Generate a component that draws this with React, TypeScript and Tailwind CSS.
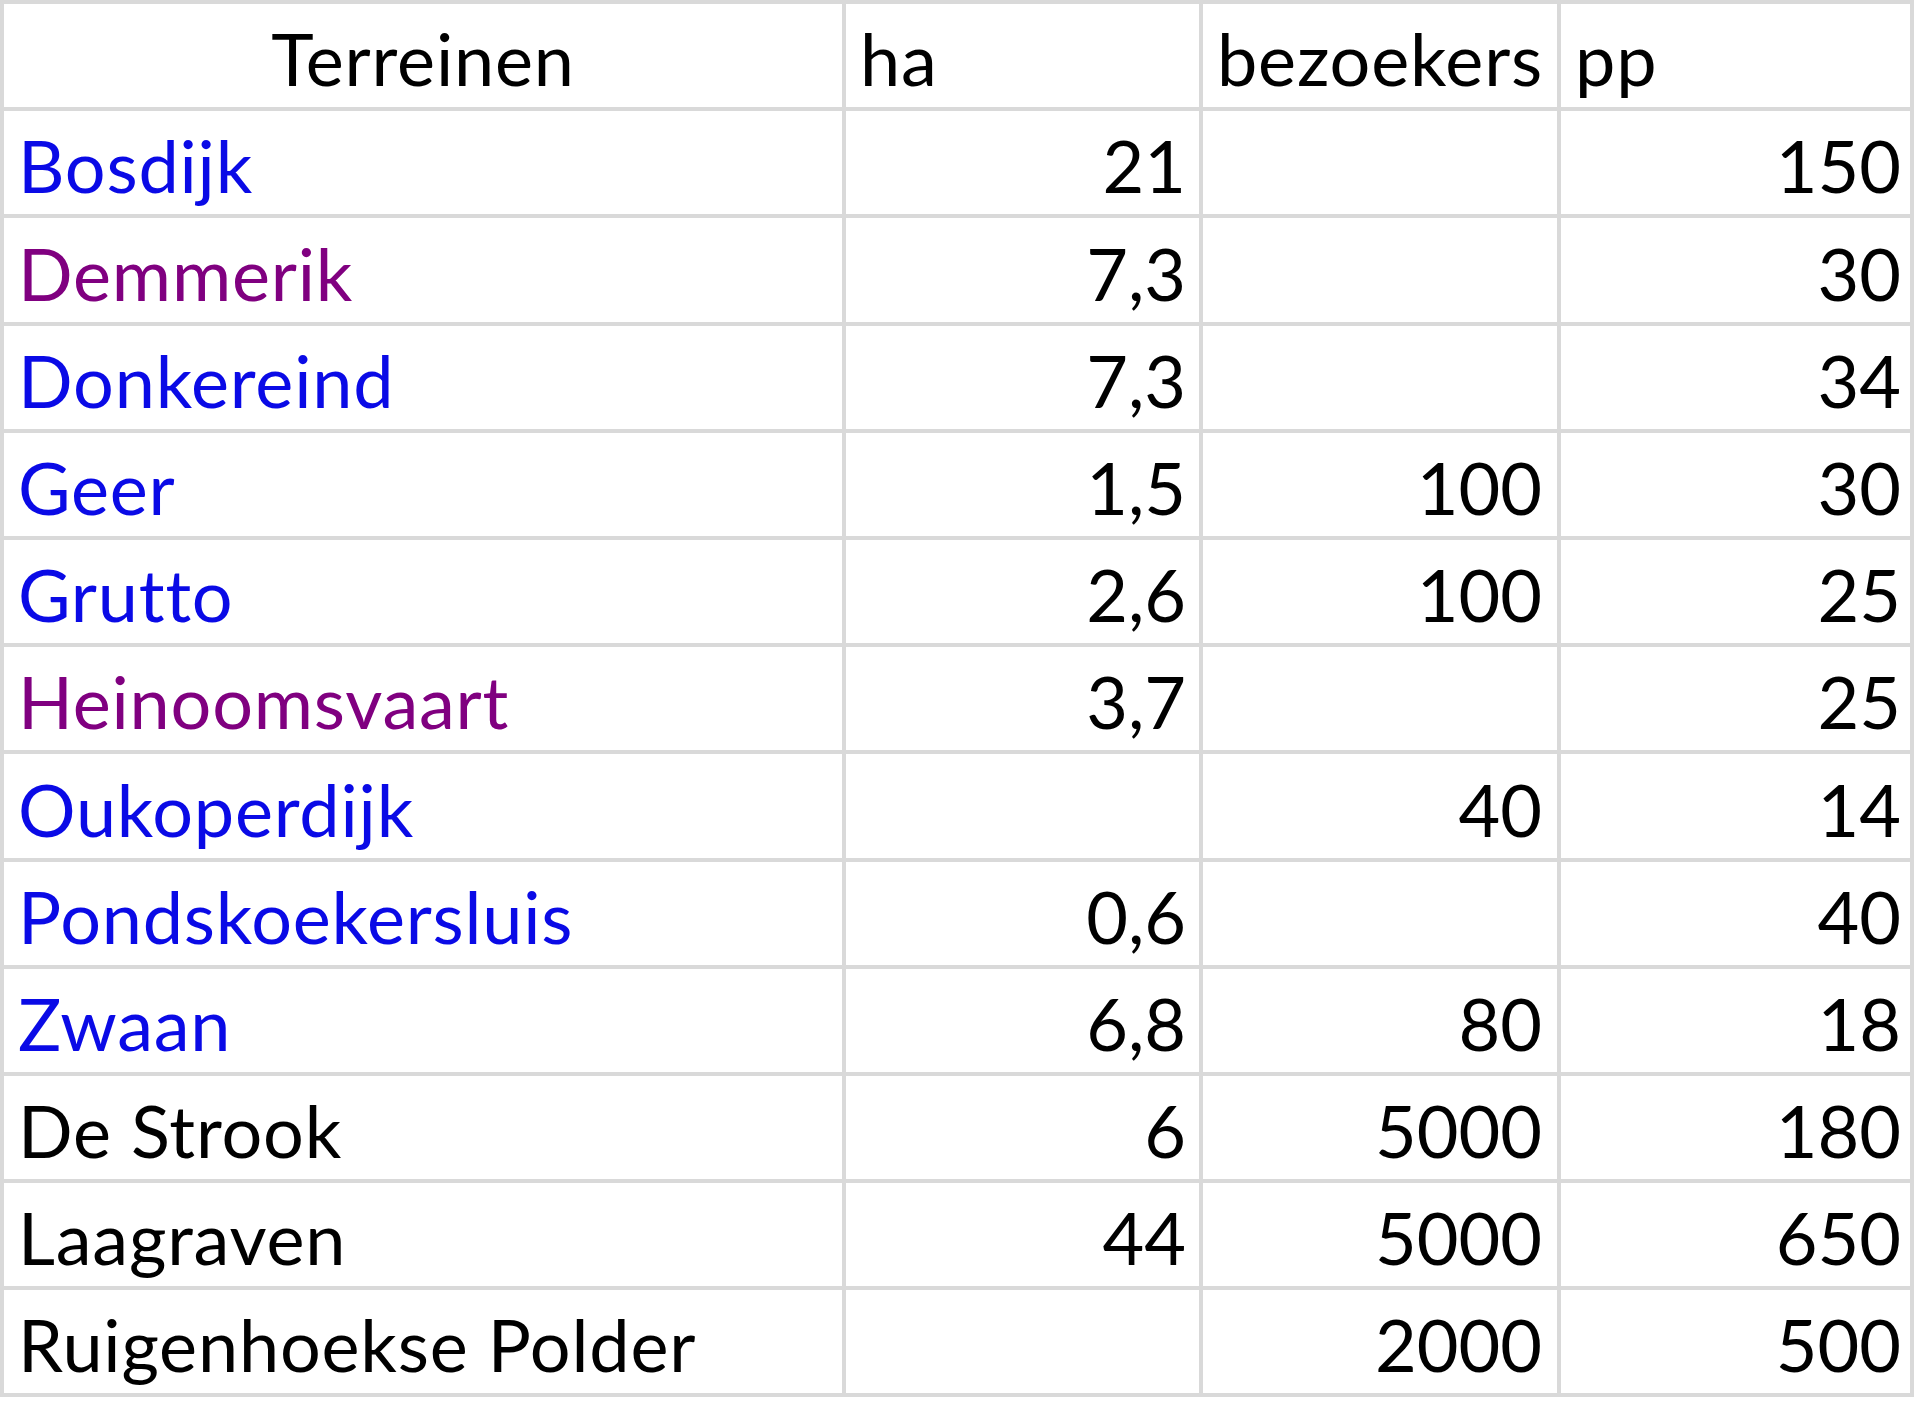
import React from 'react';

type Row = {
  name: string;
  tone: 'link' | 'visited' | 'plain';
  ha: string;
  bezoekers: string;
  pp: string;
};

const rows: Row[] = [
  { name: 'Bosdijk', tone: 'link', ha: '21', bezoekers: '', pp: '150' },
  { name: 'Demmerik', tone: 'visited', ha: '7,3', bezoekers: '', pp: '30' },
  { name: 'Donkereind', tone: 'link', ha: '7,3', bezoekers: '', pp: '34' },
  { name: 'Geer', tone: 'link', ha: '1,5', bezoekers: '100', pp: '30' },
  { name: 'Grutto', tone: 'link', ha: '2,6', bezoekers: '100', pp: '25' },
  { name: 'Heinoomsvaart', tone: 'visited', ha: '3,7', bezoekers: '', pp: '25' },
  { name: 'Oukoperdijk', tone: 'link', ha: '', bezoekers: '40', pp: '14' },
  { name: 'Pondskoekersluis', tone: 'link', ha: '0,6', bezoekers: '', pp: '40' },
  { name: 'Zwaan', tone: 'link', ha: '6,8', bezoekers: '80', pp: '18' },
  { name: 'De Strook', tone: 'plain', ha: '6', bezoekers: '5000', pp: '180' },
  { name: 'Laagraven', tone: 'plain', ha: '44', bezoekers: '5000', pp: '650' },
  { name: 'Ruigenhoekse Polder', tone: 'plain', ha: '', bezoekers: '2000', pp: '500' },
];

const toneClass = {
  link: 'text-[#0a0ae6]',
  visited: 'text-[#800080]',
  plain: 'text-black',
};

const rowClass =
  'grid grid-cols-[842px_357px_358px_1fr] h-[107.2px] border-b-4 border-[#d9d9d9]';
const cellClass =
  'flex items-end h-full pb-[13px] leading-none border-r-4 border-[#d9d9d9] whitespace-nowrap';
// numbers sit right-aligned, a touch tighter than the labels
const numClass = `${cellClass} justify-end tracking-normal`;

const App: React.FC = () => {
  return (
    <div
      className="w-[1914px] h-[1405px] overflow-hidden bg-white text-[72px] tracking-[0.8px] text-black"
      style={{ fontFamily: 'Lato, "Noto Sans", sans-serif' }}
    >
      <div className="border-t-4 border-l-4 border-[#d9d9d9]">
        <div className={rowClass}>
          <div className={`${cellClass} justify-center px-[14px]`}>Terreinen</div>
          <div className={`${cellClass} px-[14px]`}>ha</div>
          <div className={`${cellClass} px-[14px]`}>bezoekers</div>
          <div className={`${cellClass} px-[14px] border-r-0`}>pp</div>
        </div>

        {rows.map((r) => (
          <div key={r.name} className={rowClass}>
            <div className={`${cellClass} px-[14px] ${toneClass[r.tone]}`}>{r.name}</div>
            <div className={`${numClass} pr-[13px]`}>{r.ha}</div>
            <div className={`${numClass} pr-[15px]`}>{r.bezoekers}</div>
            <div className={`${numClass} pr-[9px] border-r-0`}>{r.pp}</div>
          </div>
        ))}
      </div>
    </div>
  );
};

export default App;
